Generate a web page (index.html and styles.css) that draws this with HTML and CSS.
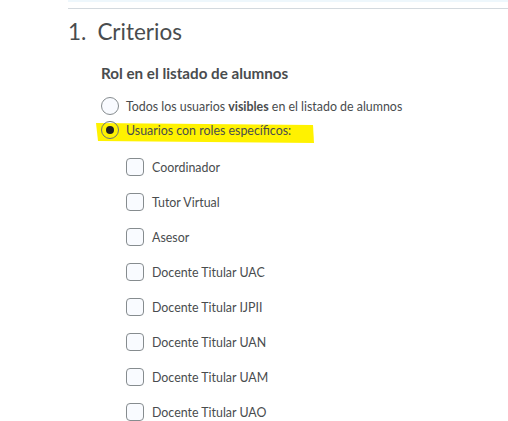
FILE: index.html
```html
<!DOCTYPE html>
<html lang="es">
<head>
<meta charset="utf-8">
<link rel="stylesheet" href="styles.css">
</head>
<body>
<div class="page">
  <div class="topbar"></div>
  <div class="rule"></div>
  <h1 class="title"><span class="num">1.</span>Criterios</h1>
  <section class="group">
    <h2 class="label">Rol en el listado de alumnos</h2>
    <div class="radios">
      <label class="radio"><span class="circle"></span><span>Todos los usuarios <b>visibles</b> en el listado de alumnos</span></label>
      <label class="radio selected">
        <svg class="marker" width="222" height="24" viewBox="0 0 222 24"><polygon points="0,3 217,5 218,23 2,21" fill="#fff200"/></svg>
        <span class="circle"><span class="dot"></span></span><span class="txt">Usuarios con roles específicos:</span></label>
    </div>
    <div class="checks">
      <label class="check"><span class="box"></span>Coordinador</label>
      <label class="check"><span class="box"></span>Tutor Virtual</label>
      <label class="check"><span class="box"></span>Asesor</label>
      <label class="check"><span class="box"></span>Docente Titular UAC</label>
      <label class="check"><span class="box"></span>Docente Titular IJPII</label>
      <label class="check"><span class="box"></span>Docente Titular UAN</label>
      <label class="check"><span class="box"></span>Docente Titular UAM</label>
      <label class="check"><span class="box"></span>Docente Titular UAO</label>
    </div>
  </section>
</div>
</body>
</html>
```
FILE: styles.css
```css
html, body { margin: 0; padding: 0; background: #fff; }
body { font-family: Lato, "Noto Sans", sans-serif; color: #494c4e; overflow: hidden; }
.page { padding-left: 68px; }
.topbar { height: 2px; background: #eef7fc; }
.rule { height: 1px; background: #d3d9de; margin-top: 6px; }
.title { margin: 10px 0 0 0; font-size: 22.5px; font-weight: 400; line-height: 26px; color: #494c4e; }
.title .num { margin-right: 11px; }
.group { padding-left: 33px; }
.label { margin: 19px 0 0 0; font-size: 15.2px; font-weight: 700; line-height: 18px; color: #494c4e; }
.radios { margin-top: 15px; display: flex; flex-direction: column; gap: 6px; }
.radio { position: relative; display: flex; align-items: center; gap: 7px; font-size: 12.4px; height: 18px; }
.radio b { font-weight: 700; }
.radio .txt, .radio > span:last-child { position: relative; }
.circle { position: relative; width: 16px; height: 16px; border: 1px solid #868c8f; border-radius: 50%; background: #f9fbff; display: flex; align-items: center; justify-content: center; flex: none; }
.selected .circle { background: transparent; border-color: #6e7376; }
.dot { width: 8px; height: 8px; border-radius: 50%; background: #202020; }
.marker { position: absolute; left: -5px; top: -1px; }
.checks { margin-top: 19px; padding-left: 25px; display: flex; flex-direction: column; gap: 17px; }
.check { display: flex; align-items: center; gap: 8px; font-size: 12.4px; height: 18px; }
.box { width: 16px; height: 16px; border: 1px solid #868c8f; border-radius: 4px; background: #f9fbff; flex: none; }
```
